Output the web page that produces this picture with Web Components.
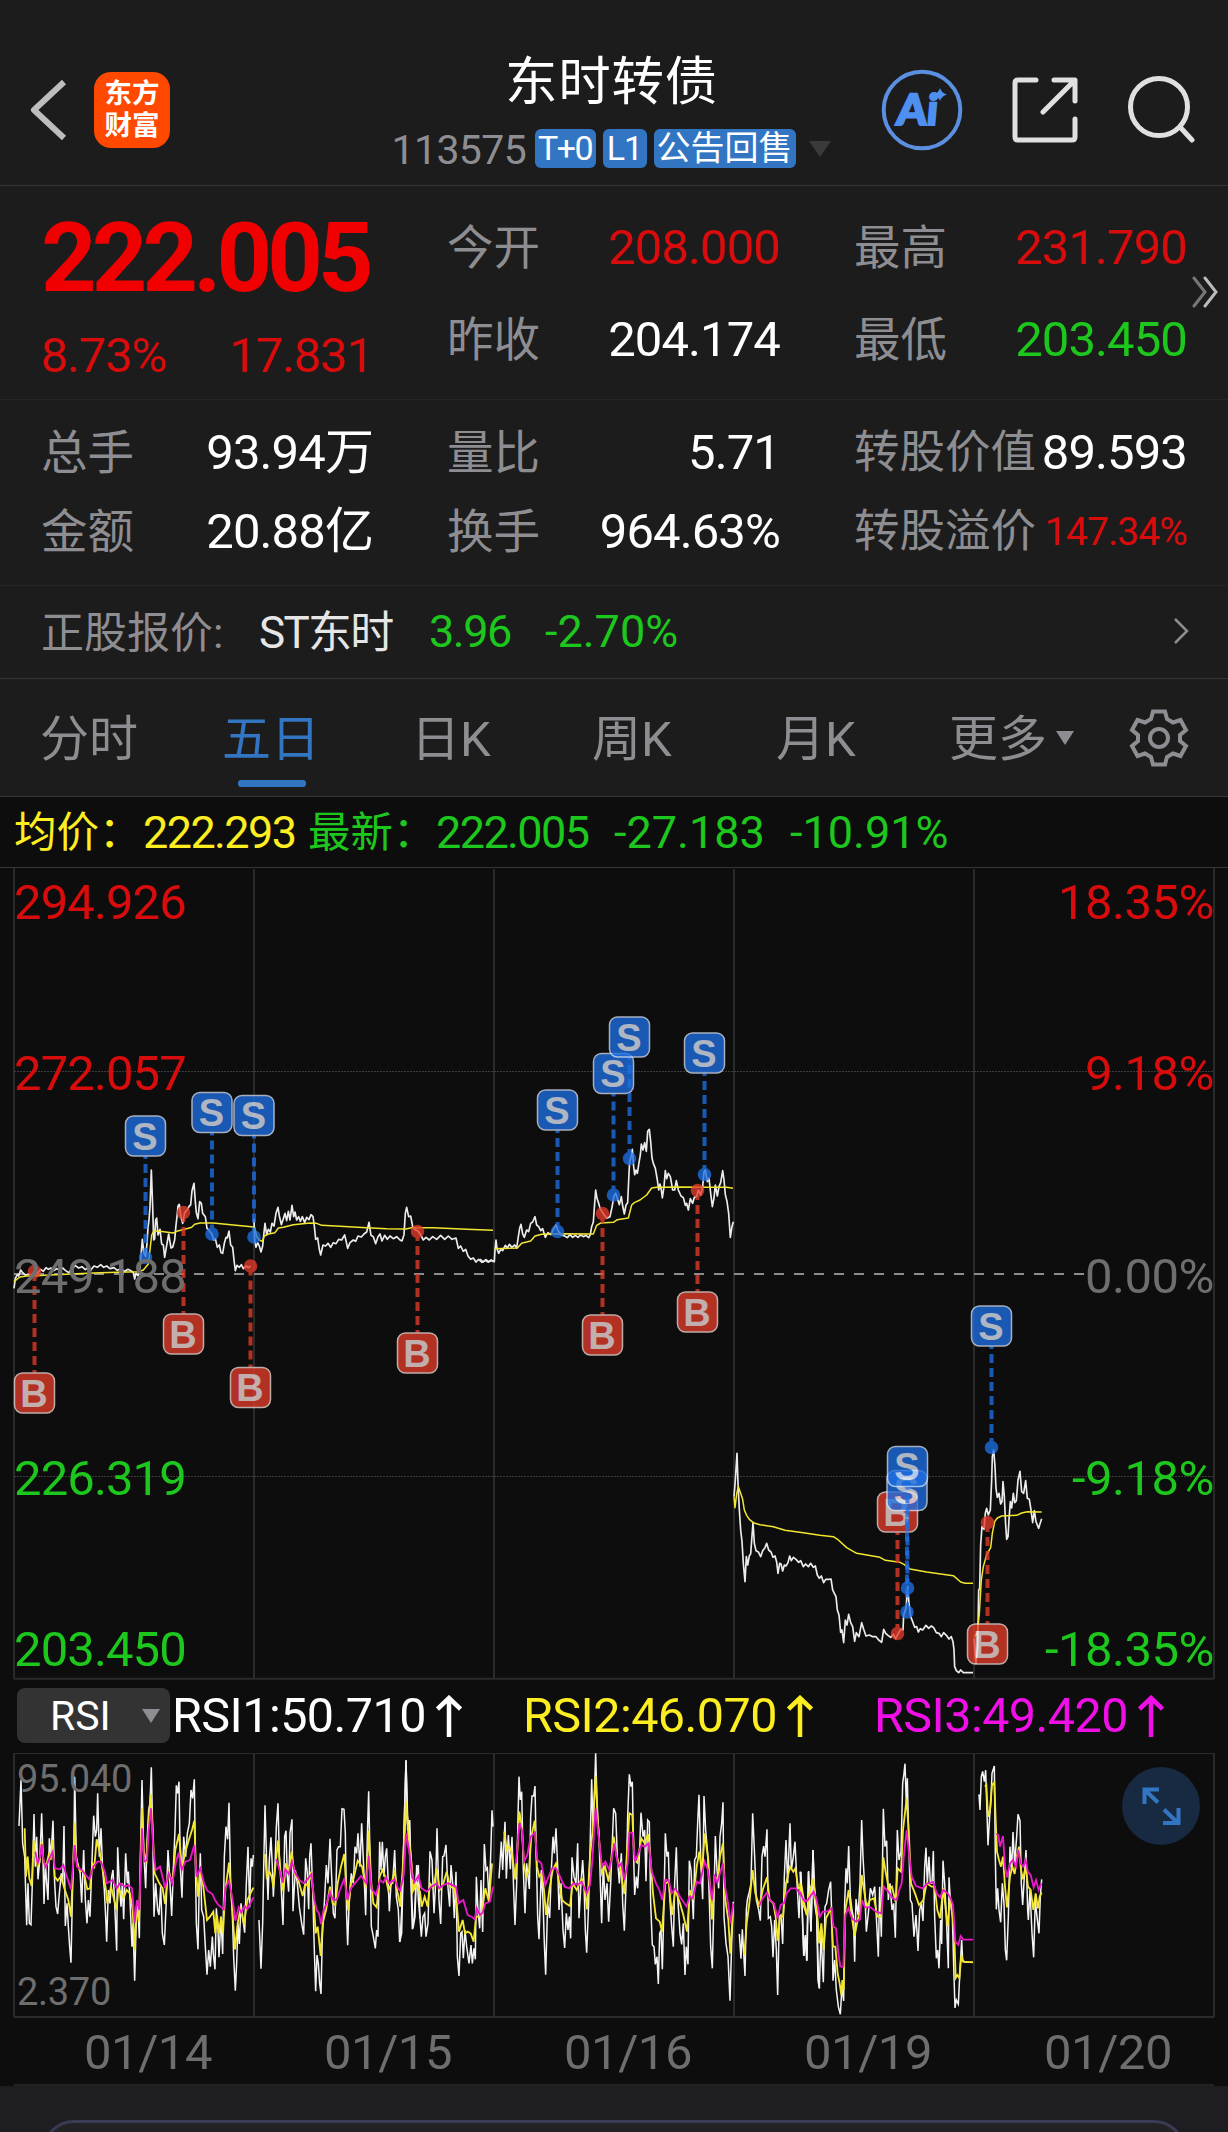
<!DOCTYPE html>
<html lang="zh-CN">
<head>
<meta charset="utf-8">
<title>东时转债 113575</title>
<style>
    html, body{
        margin: 0;
        background: #1c1c1c;
    }
    body{
        width: 1228px;
        height: 2132px;
        overflow: hidden;
        font-family: Roboto, "Noto Sans CJK SC", sans-serif;
        color: #fff;
    }
</style>
</head>
<body>
<quote-page></quote-page>

<script>
const RED = '#d80c0c';
const GREEN = '#1dc71d';

class BaseElement extends HTMLElement {
  connectedCallback() {
    if (this.shadowRoot) return;
    const template = document.createElement('template');
    template.innerHTML = this.render();
    this.attachShadow({ mode: 'open' }).appendChild(template.content.cloneNode(true));
  }
}

class QuoteHeader extends BaseElement {
  render() {
    return `
<style>
    :host{
        display: flex;
        height: 186px;
        box-sizing: border-box;
        padding: 50px 33px 0 28px;
        border-bottom: 1px solid #363636;
        justify-content: space-between;
    }
    .left, .right{
        display: flex;
        width: 345px;
        height: 120px;
        align-items: center;
    }
    .logo{
        width: 76px;
        height: 76px;
        box-sizing: border-box;
        padding-top: 3px;
        margin-left: 26px;
        border-radius: 17px;
        background: #ff4800;
        font: 700 27.500px/32px "Noto Sans CJK SC", sans-serif;
        text-align: center;
    }
    .mid{
        display: flex;
        flex-direction: column;
        align-items: center;
    }
    .name{
        margin-top: 1px;
        font-size: 52.5px;
        line-height: 62px;
        letter-spacing: .7px;
    }
    .code{
        display: flex;
        gap: 7px;
        margin-top: 16px;
        height: 39px;
        align-items: center;
        font-size: 41px;
        color: #8e8d92;
    }
    .num{ width: 136px; letter-spacing: -.6px; margin-top: 2px; }
    .tag{
        width: 142px;
        height: 39px;
        border-radius: 6px;
        background: #3276c3;
        color: #fff;
        font-size: 34px;
        line-height: 38px;
        white-space: nowrap;
        text-align: center;
    }
    .t0{ width: 61px; letter-spacing: -1.500px; }
    .l1{ width: 44px; letter-spacing: -1px; }
    .tri{
        margin: 2px 0 0 5px;
    }
    .right{
        justify-content: flex-end;
        gap: 49px;
    }
    svg{ display: block; flex: none; }
</style>
<div class="left">
    <svg width="40" height="64" viewBox="0 0 40 64" fill="none" stroke="#bdbdbd" stroke-width="6" stroke-linejoin="round"><path d="M36 4L6 32L36 60"/></svg>
    <div class="logo">东方<br>财富</div>
</div>
<div class="mid">
    <div class="name">东时转债</div>
    <div class="code">
        <span class="num">113575</span><span class="tag t0">T+0</span><span class="tag l1">L1</span><span class="tag">公告回售</span>
        <svg class="tri" width="24" height="17" viewBox="0 0 24 17"><path d="M1 0H23L12 16Z" fill="#3a3a3a"/></svg>
    </div>
</div>
<div class="right">
    <svg width="82" height="82" viewBox="-41 -41 82 82">
        <circle r="38.3" fill="none" stroke="#5b8fe0" stroke-width="4"/>
        <text x="-25" y="15" font-family="Lato" font-weight="900" font-size="43" fill="#4f8ff0" stroke="#4f8ff0" stroke-width="2" transform="skewX(-5)">Ai</text>
        <path d="M18-22Q19.500-17 25-15.500Q19.500-14 18-9Q16.500-14 11-15.500Q16.500-17 18-22Z" fill="#4f8ff0"/>
    </svg>
    <svg width="66" height="66" viewBox="0 0 66 66" fill="none" stroke="#e0e0e0" stroke-width="5" stroke-linecap="round" stroke-linejoin="round">
        <path d="M24 3H6Q3 3 3 6V60Q3 63 6 63H60Q63 63 63 60V42M42 3H63V24M62 4L31 35"/>
    </svg>
    <svg width="68" height="68" viewBox="0 0 68 68" fill="none" stroke="#e0e0e0" stroke-width="5" stroke-linecap="round">
        <circle cx="32" cy="31" r="28.500"/><path d="M53 51L65 64"/>
    </svg>
</div>`;
  }
}

// label on the left, slotted value on the right
class QuoteCell extends BaseElement {
  render() {
    return `
<style>
    :host{
        display: flex;
        justify-content: space-between;
        align-items: center;
        white-space: nowrap;
        font-size: 49px;
        line-height: 56px;
        letter-spacing: -.9px;
    }
    .label{
        color: #8e8d92;
        font-size: var(--label-size, 46.500px);
        letter-spacing: 0;
    }
</style>
<span class="label">${this.getAttribute('label')}</span>
<slot></slot>`;
  }
}

class QuotePanel extends BaseElement {
  render() {
    return `
<style>
    :host{ display: block; }
    .grid{
        display: grid;
        box-sizing: border-box;
        grid-template-columns: 332px 333px 333px;
        column-gap: 74px;
        padding: 0 41px;
        border-bottom: 1px solid #262626;
    }
    .top{
        position: relative;
        height: 214px;
        grid-template-rows: 92px 92px;
        padding-top: 16px;
    }
    .bottom{
        height: 186px;
        grid-template-rows: 79px 79px;
        padding-top: 13px;
    }
    .price{
        grid-row: 1 / 3;
        display: flex;
        flex-direction: column;
        color: ${RED};
    }
    .big{
        font-size: 97px;
        line-height: 112px;
        font-weight: 700;
        letter-spacing: -4.900px;
        color: #f00000;
    }
    .change{
        display: flex;
        justify-content: space-between;
        margin-top: 12px;
        font-size: 49px;
        line-height: 60px;
        letter-spacing: -1.200px;
    }
    .red{ color: ${RED}; }
    .green{ color: ${GREEN}; }
    .long{ --label-size: 45.500px; }
    .small{ font-size: 39px; }
    .more{
        position: absolute;
        right: 9px;
        top: 90px;
    }
</style>
<div class="grid top">
    <div class="price">
        <div class="big">222.005</div>
        <div class="change"><span>8.73%</span><span>17.831</span></div>
    </div>
    <quote-cell label="今开"><span class="red">208.000</span></quote-cell>
    <quote-cell label="最高"><span class="red">231.790</span></quote-cell>
    <quote-cell label="昨收">204.174</quote-cell>
    <quote-cell label="最低"><span class="green">203.450</span></quote-cell>
    <svg class="more" width="28" height="32" viewBox="0 0 28 32" fill="none" stroke-width="3" stroke-linecap="round"><path d="M3 2L14 16L3 30" stroke="#777"/><path d="M14 2L25 16L14 30" stroke="#bbb"/></svg>
</div>
<div class="grid bottom">
    <quote-cell label="总手">93.94万</quote-cell>
    <quote-cell label="量比">5.71</quote-cell>
    <quote-cell class="long" label="转股价值">89.593</quote-cell>
    <quote-cell label="金额">20.88亿</quote-cell>
    <quote-cell label="换手">964.63%</quote-cell>
    <quote-cell class="long" label="转股溢价"><span class="red small">147.34%</span></quote-cell>
</div>`;
  }
}

class StockRow extends BaseElement {
  render() {
    return `
<style>
    :host{
        display: flex;
        height: 93px;
        box-sizing: border-box;
        align-items: center;
        padding: 0 39px 2px 41px;
        border-bottom: 1px solid #363636;
        font-size: 45px;
        color: ${GREEN};
        white-space: nowrap;
    }
    .label, .name{ padding-bottom: 4px; }
    .label{ width: 218px; color: #8e8d92; font-size: 43px; }
    .name{ width: 170px; color: #e6e6e6; font-size: 44px; letter-spacing: -1.700px; }
    .last{ width: 116px; letter-spacing: -1.500px; }
    svg{ margin-left: auto; }
</style>
<span class="label">正股报价:</span>
<span class="name">ST东时</span>
<span class="last">3.96</span>
<span>-2.70%</span>
<svg width="16" height="28" viewBox="0 0 16 28" fill="none" stroke="#8e8d92" stroke-width="2.500"><path d="M2 2L14 14L2 26"/></svg>`;
  }
}

class PeriodTabs extends BaseElement {
  render() {
    return `
<style>
    :host{
        display: grid;
        grid-template-columns: 182px 189px 181px 184px 173px 180px 60px;
        height: 118px;
        box-sizing: border-box;
        border-bottom: 1px solid #363636;
        padding-left: 40px;
        align-items: center;
        font-size: 49px;
        color: #8e8d92;
    }
    span{
        display: flex;
        height: 117px;
        box-sizing: border-box;
        padding-bottom: 7px;
        align-items: center;
        position: relative;
        white-space: nowrap;
    }
    .on{ color: #3276c3; }
    .on::after{
        content: "";
        position: absolute;
        left: 16px;
        bottom: 9px;
        width: 68px;
        height: 7px;
        border-radius: 3px;
        background: #3276c3;
    }
    .tri{ margin: 7px 0 0 9px; }
</style>
<span>分时</span>
<span class="on">五日</span>
<span>日K</span>
<span>周K</span>
<span>月K</span>
<span>更多<svg class="tri" width="18" height="14" viewBox="0 0 18 14"><path d="M0 0H18L9 14Z" fill="#8e8d92"/></svg></span>
<svg width="60" height="60" viewBox="-30 -30 60 60" fill="none" stroke="#8e8d92" stroke-width="4">
    <path d="M-6-26.500H6L8-19L14-15.500L21.500-18L27-8L21-3V3L27 8L21.500 18L14 15.500L8 19L6 26.500H-6L-8 19L-14 15.500L-21.500 18L-27 8L-21 3V-3L-27-8L-21.500-18L-14-15.500L-8-19Z"/>
    <circle r="9"/>
</svg>`;
  }
}

class ChartLegend extends BaseElement {
  render() {
    return `
<style>
    :host{
        display: flex;
        height: 70px;
        align-items: center;
        padding-left: 14px;
        font-size: 45px;
        color: ${GREEN};
        white-space: nowrap;
    }
    span{ box-sizing: border-box; }
    .cn{ font-size: 42.500px; padding-bottom: 7px; }
    .num{ letter-spacing: -1.600px; }
    .avg{ color: #fcee21; }
</style>
<span class="avg cn" style="width:129px">均价：</span>
<span class="avg num" style="width:165px">222.293</span>
<span class="cn" style="width:128px">最新：</span>
<span class="num" style="width:178px">222.005</span>
<span style="width:176px">-27.183</span>
<span>-10.91%</span>`;
  }
}

// Traces are kept in thirds of a pixel; dx/dy place each block on the chart.
const PRICE = [
  { dx: 0, dy: 1140, line: '42,445 46,415 52,404 56,408 62,390 68,398 76,405 86,402 95,405 104,395 112,400 122,388 130,394 138,383 145,388 153,384 160,392 170,386 178,389 188,384 196,391 206,398 216,386 226,377 236,384 246,380 256,389 264,383 272,391 282,378 292,382 302,374 311,382 320,378 330,386 342,383 352,391 362,386 374,394 384,388 394,393 400,398 404,417 408,400 414,407 418,395 422,360 427,298 432,340 437,350 441,310 444,262 447,240 450,200 454,90 458,200 461,300 464,296 467,240 470,234 474,285 480,268 485,312 490,315 494,352 499,322 506,282 513,324 518,322 524,300 528,255 531,230 534,198 538,193 543,232 548,250 554,218 561,210 568,198 572,195 576,152 582,130 586,185 589,218 594,236 599,185 604,190 608,220 616,230 621,265 628,272 636,283 641,300 646,296 652,322 658,315 663,338 668,340 673,310 678,292 682,294 687,273 692,315 698,322 702,360 706,392 711,376 718,382 724,374 730,386 738,378 745,383 752,378',
    avg: '42,425 50,418 60,411 80,408 105,407 150,405 230,401 300,398 380,396 415,395 430,390 445,372 450,330 455,285 462,272 480,274 520,279 530,274 545,270 565,265 575,262 584,253 600,249 640,249 700,255 762,261' },
  { dx: 0, dy: 1140, line: '762,236 764,300 768,322 773,308 778,318 783,336 788,318 792,278 795,250 800,284 805,268 811,276 816,250 822,258 828,220 834,202 838,228 844,254 850,236 855,220 860,242 865,214 870,240 876,196 881,230 885,216 890,240 896,230 901,244 907,230 914,248 920,232 927,239 933,224 939,230 943,258 947,298 953,294 958,328 962,345 969,315 977,318 984,310 992,322 1000,308 1008,311 1016,298 1025,300 1034,285 1038,302 1043,325 1050,308 1060,300 1067,304 1074,288 1084,291 1092,282 1100,276 1107,247 1113,286 1120,290 1127,311 1134,290 1140,282 1146,303 1154,286 1162,298 1170,288 1180,296 1190,290 1200,300 1206,303 1212,284 1216,220 1220,202 1226,230 1232,228 1238,260 1245,269 1254,273 1262,285 1270,300 1278,292 1288,300 1298,290 1310,298 1322,286 1334,298 1345,288 1356,298 1368,294 1375,325 1382,318 1390,334 1397,328 1404,348 1412,358 1420,354 1428,366 1436,358 1446,367 1455,361 1464,366 1474,360 1480,366',
    avg: '764,262 770,290 778,300 787,304 793,288 805,282 825,278 835,264 850,262 880,254 930,249 950,250 965,256 1020,259 1100,263 1160,266 1218,267 1235,263 1300,263 1400,268 1479,271' },
  { dx: 480, dy: 960, line: '0,897 10,906 18,899 26,906 34,901 43,905 45,870 48,840 51,866 56,880 62,868 68,872 76,856 82,864 88,853 96,862 104,855 110,864 115,830 119,805 123,793 128,822 133,832 140,810 146,815 152,790 158,786 165,770 170,795 176,800 182,812 188,806 196,832 204,818 212,824 220,808 228,795 234,812 244,825 254,828 262,833 270,824 278,832 286,826 294,832 302,825 310,830 318,826 326,833 331,824 335,800 340,786 344,730 347,690 351,715 356,730 360,745 369,760 380,775 390,770 396,742 402,708 407,700 412,715 418,734 424,710 428,738 433,762 438,735 443,728 447,640 449,605 453,592 457,568 461,620 464,644 468,630 472,640 477,608 481,585 484,552 489,570 494,548 499,574 503,514 508,508 512,545 516,594 520,610 526,625 532,660 536,690 540,672 544,690 547,714 552,680 556,632 560,656 565,640 571,650 578,690 584,690 589,662 595,690 603,708 610,713 616,736 620,730 625,750 631,716 638,730 643,712 650,710 655,690 662,705 668,680 672,635 676,630 682,665 687,654 692,700 697,740 702,714 706,675 712,708 717,680 722,668 728,632 732,660 736,704 741,724 746,760 751,832 756,800 760,785',
    avg: '44,866 112,864 125,850 152,843 165,828 185,823 240,821 340,822 350,796 362,789 400,787 412,779 445,774 455,735 463,728 480,720 500,705 515,684 530,682 600,681 680,682 740,682 759,685' },
  { dx: 720, dy: 1280, line: '42,650 46,600 51,520 54,610 58,690 62,750 66,785 70,850 75,905 79,830 83,855 88,827 92,822 99,728 103,790 108,812 115,816 122,830 128,812 135,803 140,790 146,810 153,816 159,832 165,828 170,846 174,880 179,850 183,852 188,873 193,855 198,858 204,848 209,828 214,842 220,832 228,838 236,847 242,842 250,860 257,852 265,860 272,850 280,862 286,858 292,885 298,895 304,888 311,908 317,898 325,898 333,897 338,930 343,940 348,950 352,990 357,1005 362,1057 366,1050 371,1088 376,1020 381,1035 386,1003 392,1028 398,1040 404,1084 409,1058 417,1070 425,1028 431,1048 438,1068 448,1065 458,1070 468,1070 476,1080 485,1087 491,1048 497,1060 504,1066 512,1072 520,1063 527,1076 534,1062 542,1048 549,1050 551,1005 558,985 563,920 567,970 572,1010 578,1025 584,1042 590,1040 595,1056 601,1046 608,1050 618,1036 626,1045 634,1038 641,1043 649,1058 657,1060 664,1070 671,1058 679,1066 687,1077 694,1070 699,1085 702,1110 704,1160 709,1172 716,1178 722,1170 730,1178 759,1178',
    avg: '42,650 45,683 50,642 55,620 62,640 68,658 73,690 80,706 88,718 100,728 120,734 160,740 195,751 250,758 300,766 340,770 355,780 380,803 410,820 480,832 496,841 540,847 552,853 570,867 620,876 700,887 722,906 735,910 759,910' },
  { dx: 720, dy: 1280, line: '762,1075 768,1150 773,1100 776,930 779,925 782,795 786,740 792,748 796,700 800,685 805,705 811,690 815,600 817,530 821,510 825,560 828,625 832,652 837,640 842,672 846,665 849,605 853,650 857,735 860,778 864,770 867,720 871,665 875,684 880,640 884,668 889,662 894,600 900,574 905,635 911,640 917,602 922,655 928,658 933,690 938,728 943,692 948,725 956,745 961,728 965,716',
    avg: '762,1070 772,1060 778,1000 784,900 790,860 800,824 812,803 817,760 824,725 832,714 845,708 890,706 905,699 922,695 965,696' }
];

const MARKS = [
  ['B', 34.5, 1271.5], ['S', 145.5, 1257.5], ['B', 183.5, 1212.5], ['S', 212, 1234], ['B', 250.5, 1266], ['S', 254, 1237],
  ['B', 417.5, 1231.5], ['S', 557.5, 1231.5], ['B', 602.5, 1213.5], ['S', 613.5, 1195], ['S', 629.5, 1158.5],
  ['B', 697.5, 1190.5], ['S', 704.5, 1174.5], ['B', 897.5, 1633.5, -1], ['S', 907, 1612], ['S', 907.5, 1588],
  ['S', 991.5, 1447.5], ['B', 987.5, 1522.5]
];

class PriceChart extends BaseElement {
  mark([type, x, y, flip]) {
    const sell = type === 'S';
    const dir = sell || flip ? -1 : 1;
    const box = y + dir * 121.5;
    return `<g class="${sell ? 's' : 'b'}">
      <path d="M${x} ${box + -dir * 20}V${y}" class="stem"/>
      <circle cx="${x}" cy="${y}" r="6.800"/>
      <rect x="${x - 20}" y="${box - 20}" width="40" height="40" rx="8"/>
      <text x="${x - .5}" y="${box + 13.5}" text-anchor="middle">${type}</text>
    </g>`;
  }

  render() {
    const levels = [
      [919, '294.926', '18.35%', RED], [1090, '272.057', '9.18%', RED], [1293, '249.188', '0.00%', '#6e6e6e'],
      [1495, '226.319', '-9.18%', GREEN], [1666, '203.450', '-18.35%', GREEN]
    ];
    return `
<style>
    :host{ display: block; height: 813px; }
    svg{ display: block; }
    .line{ stroke: #ececec; stroke-width: 5; }
    .avg{ stroke: #f2e630; stroke-width: 4.5; }
    polyline{ fill: none; stroke-linejoin: round; }
    .grid{ fill: none; stroke: #2a2a2a; stroke-width: 2; }
    .axis{ font-size: 49px; letter-spacing: -.9px; }
    .pct{ letter-spacing: -.5px; }
    .s, .b{ opacity: .77; }
    .s{ fill: #1d70e6; stroke: #1d70e6; }
    .b{ fill: #e63c2a; stroke: #e63c2a; }
    .stem{ stroke-width: 4; stroke-dasharray: 9 5; stroke-dashoffset: 6; fill: none; }
    circle{ stroke: none; }
    rect{ stroke: #d6e0f4; stroke-width: 1.5; }
    .b rect{ stroke: #f4dcd8; }
    .s text, .b text{ font: bold 38px "Liberation Sans", sans-serif; fill: #e0e9fa; stroke: none; }
    .b text{ fill: #fadfdf; }
</style>
<svg width="1228" height="813" viewBox="0 867 1228 813">
    <path class="grid" d="M14 867V1679M254 869V1679M494 869V1679M734 869V1679M974 869V1679M1214 867V1679M14 1678.700H1214"/>
    <path d="M0 867.500H1228" stroke="#363636"/>
    <path d="M14 1071.500H1214M14 1476.500H1214" stroke="#3c3c3c" stroke-dasharray="2 1"/>
    <path d="M14 1274H1085" stroke="#8c8c8c" stroke-width="2" stroke-dasharray="10 10"/>
    ${PRICE.map(p => `<g transform="translate(${p.dx} ${p.dy}) scale(.33333)"><polyline class="line" points="${p.line}"/><polyline class="avg" points="${p.avg}"/></g>`).join('')}
    ${MARKS.map(m => this.mark(m)).join('')}
    ${levels.map(([y, price, pct, color]) => `<text class="axis" x="14" y="${y}" fill="${color}">${price}</text><text class="axis pct" x="1214" y="${y}" fill="${color}" text-anchor="end">${pct}</text>`).join('')}
</svg>`;
  }
}

class RsiBar extends BaseElement {
  render() {
    const arrow = '<svg width="26" height="42" viewBox="0 0 26 42" fill="none" stroke="currentColor" stroke-width="4.500"><path d="M13 42V3M1.500 14L13 3L24.500 14"/></svg>';
    return `
<style>
    :host{
        display: flex;
        height: 73px;
        box-sizing: border-box;
        padding: 8px 0 10px 17px;
        align-items: center;
        font-size: 48.500px;
        white-space: nowrap;
    }
    .pick{
        display: flex;
        width: 153px;
        height: 55px;
        box-sizing: border-box;
        border-radius: 8px;
        background: #333;
        align-items: center;
        padding: 0 10px 0 33px;
        justify-content: space-between;
        font-size: 41px;
    }
    .v{
        display: flex;
        align-items: center;
        justify-content: space-between;
        width: 290px;
        margin-left: 2px;
        letter-spacing: -.55px;
    }
    .two{ margin-left: 61px; color: #fcee21; }
    .three{ margin-left: 61px; color: #f00fe6; }
</style>
<div class="pick">RSI<svg width="18" height="14" viewBox="0 0 18 14"><path d="M0 0H18L9 14Z" fill="#8e8d92"/></svg></div>
<div class="v">RSI1:50.710${arrow}</div>
<div class="v two">RSI2:46.070${arrow}</div>
<div class="v three">RSI3:49.420${arrow}</div>`;
  }
}

const RSI = [
  { dx: 0,
    r1: '57,468 63,329 68,520 74,560 80,766 84,640 88,760 93,764 97,640 102,432 106,590 110,500 114,628 120,560 125,430 129,560 132,702 136,580 140,640 144,690 148,505 153,560 159,452 164,640 168,710 173,732 178,670 184,610 188,640 192,468 196,768 201,700 205,770 209,830 213,878 218,640 222,500 224,320 229,560 235,590 240,600 245,698 251,540 256,690 261,760 265,690 270,740 275,600 281,437 286,500 290,480 293,370 298,560 303,475 308,600 313,660 317,740 320,815 325,660 330,700 335,620 339,600 344,700 350,842 353,532 358,640 363,710 367,640 371,748 377,550 382,640 385,605 390,690 396,830 399,760 404,932 409,740 413,700 418,805 422,520 426,330 431,540 437,655 441,520 446,420 450,400 454,292 458,480 462,740 467,640 473,720 477,735 482,650 487,790 493,825 499,690 504,540 509,620 515,738 520,600 525,480 529,346 533,370 537,335 541,590 546,683 551,500 557,560 562,490 568,460 573,360 578,385 583,328 586,560 589,760 594,838 597,680 601,550 605,720 611,740 616,830 621,914 626,840 631,890 637,800 640,852 645,898 649,715 654,780 657,862 663,740 668,852 673,560 678,470 683,508 687,398 692,640 697,730 701,860 706,962 710,880 714,760 718,822 723,700 728,740 734,788 739,640 744,530 749,712 753,565 757,590 760,555',
    r2: '74,475 78,620 83,560 88,625 95,648 101,510 107,560 113,590 119,575 125,515 131,580 138,590 146,555 152,570 158,510 164,620 173,632 183,618 193,655 205,690 213,740 219,600 224,458 229,570 240,605 250,600 262,658 270,655 277,580 283,590 290,508 300,550 308,600 318,660 322,700 333,650 350,720 355,655 370,685 380,660 390,670 398,720 404,840 410,710 417,755 422,560 426,415 431,540 439,580 446,450 452,372 458,480 464,610 478,640 488,655 495,702 505,600 517,640 526,540 537,492 546,595 556,545 568,505 576,480 583,452 588,600 594,680 600,600 610,650 621,750 630,740 640,725 646,790 651,735 657,790 663,740 669,790 676,660 687,578 695,690 705,838 713,760 722,712 732,765 742,690 760,653',
    r3: '106,545 113,580 120,560 125,522 131,575 138,592 146,570 158,545 165,595 180,598 190,585 198,612 213,658 224,525 231,590 245,600 268,628 280,590 292,575 303,575 316,610 320,640 338,630 350,655 360,640 375,650 385,645 396,655 404,758 411,690 418,720 426,475 432,575 441,570 446,480 453,415 460,540 467,600 480,590 490,630 495,655 506,610 517,640 528,575 536,548 545,600 556,575 570,570 583,525 590,620 601,595 612,640 622,662 637,672 645,690 655,705 671,718 676,655 687,632 698,690 706,752 716,712 724,728 734,708 742,718 760,682' },
  { dx: 0,
    r1: '777,750 783,896 788,760 791,600 795,406 800,580 804,690 808,570 813,502 817,590 820,680 826,560 829,470 834,400 838,560 843,640 849,765 854,500 858,482 862,620 866,665 870,490 876,448 879,724 886,600 892,640 898,710 905,760 911,794 917,565 922,610 926,718 929,560 933,520 938,660 943,840 947,964 951,855 955,880 959,940 963,972 967,800 973,700 979,585 984,640 990,506 995,620 1000,730 1005,745 1011,540 1016,530 1021,530 1026,416 1032,418 1036,490 1040,740 1043,826 1048,680 1054,610 1060,640 1065,530 1070,550 1074,490 1080,590 1085,460 1090,570 1094,660 1097,736 1102,500 1106,364 1110,560 1114,770 1120,800 1126,835 1130,780 1134,800 1139,515 1143,600 1147,515 1152,620 1156,560 1160,535 1164,620 1168,724 1173,640 1178,640 1184,540 1189,680 1195,720 1199,816 1205,790 1209,620 1213,450 1218,271 1224,480 1229,450 1234,640 1239,775 1245,740 1250,585 1255,690 1260,745',
    r2: '795,552 800,620 808,605 815,620 820,652 827,580 834,512 841,600 850,665 858,580 865,610 875,545 883,610 895,630 908,678 916,640 925,650 933,605 940,670 947,790 953,770 962,858 968,760 978,720 990,650 998,700 1006,705 1013,640 1023,590 1033,552 1040,680 1045,722 1053,640 1062,620 1073,572 1086,590 1098,655 1106,482 1114,640 1120,700 1130,712 1139,620 1147,600 1156,620 1165,660 1175,640 1184,600 1192,665 1201,710 1209,620 1218,394 1228,520 1236,600 1241,660 1250,620 1260,655',
    r3: '829,568 836,590 848,638 856,598 866,612 876,575 886,610 900,632 912,640 925,625 935,612 942,685 950,720 957,730 963,762 970,722 980,700 990,665 998,688 1010,690 1020,660 1033,625 1042,690 1052,655 1065,640 1083,618 1099,640 1106,558 1114,655 1128,675 1140,630 1150,638 1158,622 1168,640 1184,628 1194,655 1203,665 1210,620 1218,490 1228,545 1234,580 1240,640 1260,628' },
  { dx: 1200,
    r1: '0,815 6,700 12,480 18,271 23,480 28,450 32,610 37,778 43,740 49,620 55,585 60,745 64,800 69,740 74,730 78,800 84,760 90,544 96,570 102,730 107,640 111,475 117,690 122,762 128,560 132,558 138,525 143,640 149,710 153,585 158,640 163,745 168,605 172,860 177,918 182,790 186,785 190,865 195,780 200,830 207,880 213,825 217,880 222,835 226,868 229,620 234,720 239,775 243,630 248,786 253,522 258,600 262,594 267,690 272,560 276,421 279,470',
    r2: '0,700 8,600 18,394 26,500 33,560 38,665 48,645 60,665 65,710 74,680 83,710 90,640 100,655 110,595 119,660 130,640 140,605 150,650 163,655 170,700 177,785 188,750 195,790 203,785 212,790 221,815 228,740 238,740 245,730 256,655 267,695 276,580',
    r3: '0,665 10,620 18,490 28,545 36,620 44,635 55,618 65,655 80,665 95,650 110,640 118,655 130,645 145,640 168,650 176,700 190,690 203,735 215,740 224,748 230,715 240,735 248,728 256,700 270,695 279,650' },
  { dx: 1200,
    r1: '297,625 304,515 308,600 315,455 319,626 325,495 331,598 336,500 341,660 345,765 350,640 354,440 357,320 361,390 365,365 370,600 375,730 380,580 388,657 392,440 396,378 401,378 405,348 409,560 413,740 417,808 424,600 429,690 433,820 437,914 443,700 449,744 454,600 459,500 463,550 468,475 473,590 477,720 483,640 489,780 494,834 499,730 504,780 508,740 512,805 516,562 522,620 528,640 533,520 537,745 543,640 548,570 552,640 556,780 560,848 566,700 571,500 575,328 579,470 583,380 587,250 592,430 597,490 601,640 605,760 610,580 615,690 621,640 626,755 632,640 636,540 641,415 647,430 652,560 658,640 664,550 668,700 673,782 679,620 683,440 688,313 693,350 697,335 701,560 704,675 709,620 713,655 718,560 723,428 729,500 734,480 738,634 743,450 748,456 752,700 757,825 762,830 766,883 771,860 775,942 779,790 783,780 787,898 791,740 796,490 801,560 805,545 809,680 815,770 820,830 824,640 829,532 833,680 840,790 845,823 850,760 855,915 859,830 864,883 868,572 873,600 880,748 884,570 889,560 893,460 897,374 902,560 908,688 912,378 917,480 923,550 928,690 932,830 937,895 942,680 946,498 951,600 956,655 960,500 965,460 969,397 972,740 978,820 984,860 990,992 995,820 1000,695',
    r2: '313,485 320,540 328,530 336,550 346,628 352,540 358,425 364,460 372,580 378,620 387,600 394,500 404,452 411,590 418,620 425,610 432,660 438,735 448,660 458,600 468,580 477,635 486,690 497,700 510,708 518,640 530,660 545,625 553,650 561,718 570,560 578,480 587,318 595,480 606,610 615,590 626,635 641,500 650,560 660,590 673,672 682,530 688,430 697,435 703,570 712,578 724,505 734,520 744,492 751,560 759,670 768,745 779,755 786,785 796,640 806,635 816,735 826,660 840,700 850,735 861,785 870,660 880,690 890,590 898,545 906,610 914,490 925,570 936,748 944,620 952,630 960,560 969,520 976,690 985,750 991,850 999,720',
    r3: '348,580 358,460 366,480 372,575 382,555 392,500 405,488 412,570 424,580 436,645 446,620 456,595 468,595 480,620 494,650 508,655 520,640 533,645 545,635 560,670 570,645 577,570 587,415 595,490 606,590 616,575 628,600 636,560 643,520 655,590 664,580 673,630 683,580 688,488 697,488 705,575 715,550 724,525 734,530 746,520 755,605 768,640 778,660 787,690 796,630 806,630 815,670 826,655 840,680 860,710 868,680 878,685 890,635 900,640 914,575 924,600 936,690 944,620 952,638 960,610 969,580 975,650 985,705 991,760 1000,700' },
  { dx: 1200,
    r1: '1018,792 1023,866 1027,778 1031,850 1035,918 1039,720 1042,690 1048,665 1053,640 1058,430 1064,560 1069,690 1076,720 1081,752 1086,560 1091,528 1095,560 1101,478 1105,745 1111,740 1115,770 1119,862 1124,750 1129,840 1133,975 1138,740 1143,735 1148,822 1153,620 1158,510 1163,640 1170,460 1174,600 1180,560 1185,515 1190,620 1197,745 1203,605 1208,760 1212,858 1216,800 1220,872 1225,605 1233,785 1239,540 1245,690 1250,720 1256,940 1259,955',
    r2: '1033,855 1040,760 1048,700 1058,600 1066,670 1078,710 1088,660 1101,622 1109,690 1120,700 1127,740 1133,812 1140,740 1149,740 1158,640 1170,590 1180,605 1186,595 1195,655 1205,650 1214,705 1220,735 1230,680 1239,625 1246,680 1258,818',
    r3: '1078,708 1088,685 1101,668 1110,690 1122,700 1133,745 1142,705 1152,700 1160,670 1172,655 1188,655 1200,672 1212,695 1226,690 1238,668 1248,700 1259,740' },
  { dx: 2400,
    r1: '0,605 6,700 11,857 16,795 21,872 26,603 33,783 39,540 44,700 50,740 54,930 58,955 63,790 70,937 75,710 80,700 86,660 92,635 96,760 99,932 104,870 109,960 115,1010 121,1033 126,950 131,993 134,700 138,595 142,640 146,528 151,680 156,720 160,740 164,875 168,687 174,735 180,640 185,450 189,560 194,650 199,785 205,730 211,655 218,675 224,650 229,740 235,860 239,650 244,800 250,416 255,530 260,512 265,690 270,640 276,720 281,700 286,803 289,640 292,480 297,570 303,545 308,340 312,310 315,281 319,400 322,325 326,500 331,690 336,700 342,800 348,735 354,843 359,720 364,700 369,753 374,592 378,533 382,640 387,560 391,640 396,640 400,543 404,740 409,865 413,840 417,895 422,750 425,822 429,572 434,640 439,740 445,895 447,622 451,690 457,740 462,920 465,1014 469,990 475,1002 480,900 485,810 488,870 495,877 519,877',
    r2: '0,640 10,705 21,735 27,675 40,625 46,690 52,740 58,820 64,760 71,840 78,745 93,715 99,830 106,830 113,910 119,940 124,975 127,930 131,960 136,720 146,660 154,730 164,798 172,755 180,720 185,615 192,660 200,710 210,690 222,685 232,740 243,740 250,562 256,600 267,660 276,650 287,695 293,595 303,605 309,480 320,385 327,500 333,640 345,670 357,705 370,690 380,640 395,650 404,650 412,720 420,745 430,655 443,770 450,680 458,740 463,800 467,924 472,915 478,924 484,855 489,875 519,877',
    r3: '0,665 10,690 22,692 30,680 41,665 50,690 60,740 68,725 80,725 95,715 100,770 108,775 115,850 121,890 130,890 136,735 145,715 156,745 168,755 180,748 186,690 195,712 212,712 228,725 244,730 251,650 265,665 278,685 290,690 296,665 305,640 312,550 320,480 328,560 335,620 348,648 368,655 382,640 400,636 410,670 420,682 430,660 443,670 452,685 459,705 466,815 475,824 482,798 490,809 519,809' },
  { dx: 2400,
    r1: '537,373 540,420 544,320 548,304 553,335 557,300 562,460 564,526 569,440 573,390 576,310 583,288 586,560 589,718 593,655 597,720 602,757 607,640 612,700 616,840 620,871 625,740 630,530 635,600 639,486 644,580 650,500 654,433 660,452 664,640 668,705 673,620 678,540 683,720 685,750 690,660 696,790 701,862 706,690 711,740 717,790 721,680 725,628',
    r2: '555,350 559,345 564,440 570,420 576,345 583,338 587,450 591,545 597,570 603,590 609,560 615,650 621,712 630,620 637,590 644,612 650,560 657,530 663,600 669,628 677,590 684,650 692,660 700,720 707,670 714,715 719,680 725,668',
    r3: '589,492 595,495 600,530 609,498 615,590 621,622 630,580 639,570 648,590 655,540 662,580 670,590 677,570 683,605 692,615 701,652 708,630 716,660 724,640' }
];

class RsiChart extends BaseElement {
  render() {
    return `
<style>
    :host{ display: block; height: 265px; position: relative; }
    svg{ display: block; }
    polyline{ fill: none; stroke-width: 5.5; }
    .fast{ stroke-width: 4.5; }
    text{ font-size: 38px; fill: #6e6e6e; letter-spacing: -.3px; }
    .expand{
        position: absolute;
        left: 1122px;
        top: 14px;
    }
</style>
<svg width="1228" height="265" viewBox="0 1753 1228 265">
    <path d="M14 1753.500H1214" stroke="#2a2a2a"/>
    <path d="M14 1753V2017M254 1753V2017M494 1753V2017M734 1753V2017M974 1753V2017M1214 1753V2017M14 2017H1214" stroke="#2a2a2a" stroke-width="2"/>
    ${RSI.map(p => `<g transform="translate(${p.dx / 3} 1670) scale(.33333)"><polyline class="fast" points="${p.r1}" stroke="#f4f4f4"/><polyline points="${p.r2}" stroke="#f2e630"/><polyline points="${p.r3}" stroke="#e818c8"/></g>`).join('')}
    <text x="17" y="1792">95.040</text>
    <text x="17" y="2005">2.370</text>
</svg>
<svg class="expand" width="78" height="78" viewBox="0 0 78 78">
    <circle cx="39" cy="39" r="39" fill="#172a42"/>
    <path d="M37 22.500H22.500V37M23 23L36 35.500M41 56H56.500V41M42 42.500L56 56" fill="none" stroke="#3276c3" stroke-width="4"/>
</svg>`;
  }
}

class DateAxis extends BaseElement {
  render() {
    return `
<style>
    :host{
        display: grid;
        grid-template-columns: repeat(5, 240px);
        width: 1186px;
        height: 66px;
        margin: 0 14px;
        padding-left: 14px;
        border-bottom: 2px solid #222;
        font-size: 49px;
        line-height: 70px;
        color: #6e6e6e;
        letter-spacing: -.5px;
        text-align: center;
    }
    span{ width: 240px; }
</style>
${['01/14', '01/15', '01/16', '01/19', '01/20'].map(d => `<span>${d}</span>`).join('')}`;
  }
}

class BottomSheet extends BaseElement {
  render() {
    return `
<style>
    :host{
        display: block;
        height: 46px;
        overflow: hidden;
        background: #1d1d22;
    }
    div{
        height: 90px;
        margin: 34px 42px 0;
        border: 3px solid #3a3b55;
        border-radius: 32px;
        background: #232325;
    }
</style>
<div></div>`;
  }
}

class QuotePage extends BaseElement {
  render() {
    return `
<style>
    :host{ display: block; }
    .dark{ background: #0d0d0d; }
</style>
<quote-header></quote-header>
<quote-panel></quote-panel>
<stock-row></stock-row>
<period-tabs></period-tabs>
<div class="dark">
    <chart-legend></chart-legend>
    <price-chart></price-chart>
    <rsi-bar></rsi-bar>
    <rsi-chart></rsi-chart>
    <date-axis></date-axis>
</div>
<bottom-sheet></bottom-sheet>`;
  }
}

customElements.define('quote-header', QuoteHeader);
customElements.define('quote-cell', QuoteCell);
customElements.define('quote-panel', QuotePanel);
customElements.define('stock-row', StockRow);
customElements.define('period-tabs', PeriodTabs);
customElements.define('chart-legend', ChartLegend);
customElements.define('price-chart', PriceChart);
customElements.define('rsi-bar', RsiBar);
customElements.define('rsi-chart', RsiChart);
customElements.define('date-axis', DateAxis);
customElements.define('bottom-sheet', BottomSheet);
customElements.define('quote-page', QuotePage);
</script>
</body>
</html>
